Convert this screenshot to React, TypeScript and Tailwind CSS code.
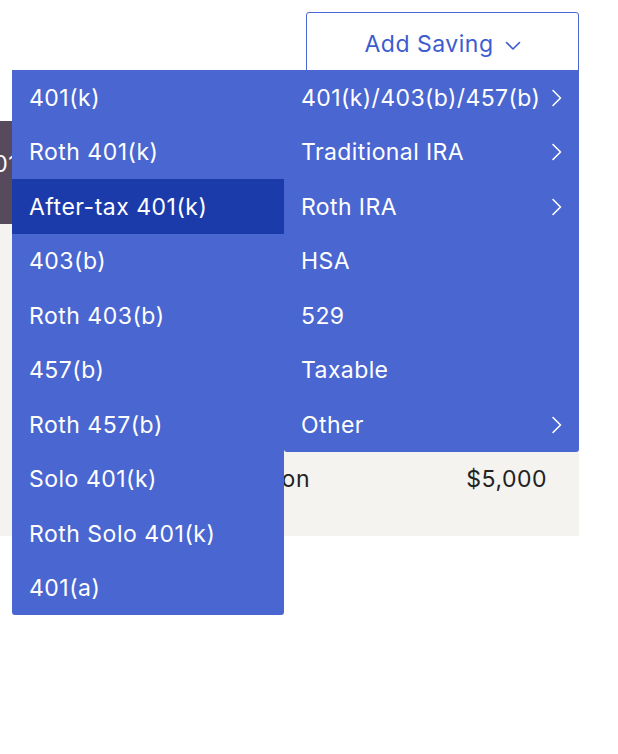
import React from "react";

const sub = [
  "401(k)",
  "Roth 401(k)",
  "After-tax 401(k)",
  "403(b)",
  "Roth 403(b)",
  "457(b)",
  "Roth 457(b)",
  "Solo 401(k)",
  "Roth Solo 401(k)",
  "401(a)",
];

const main: { label: string; arrow: boolean }[] = [
  { label: "401(k)/403(b)/457(b)", arrow: true },
  { label: "Traditional IRA", arrow: true },
  { label: "Roth IRA", arrow: true },
  { label: "HSA", arrow: false },
  { label: "529", arrow: false },
  { label: "Taxable", arrow: false },
  { label: "Other", arrow: true },
];

function Chevron() {
  return (
    <svg width="12" height="18" viewBox="0 0 12 18" fill="none" className="shrink-0">
      <path d="M2 1.5 L9.5 9 L2 16.5" stroke="white" strokeWidth="1.6" strokeLinecap="round" strokeLinejoin="round" />
    </svg>
  );
}

export default function App() {
  return (
    <div className="relative w-[618px] h-[754px] bg-white overflow-hidden" style={{ fontFamily: "Inter, 'Noto Sans', sans-serif" }}>
      {/* Button */}
      <div className="pt-[12px] pl-[306px]">
        <button className="w-[273px] h-[62px] border border-[#4a66d1] rounded-t-[3px] bg-white flex items-start justify-center pt-[14px] gap-[11px] text-[#3d5ccf] text-[23px] tracking-[0.5px]">
          <span>Add Saving</span>
          <svg width="16" height="10" viewBox="0 0 16 10" fill="none" className="mt-[14px]">
            <path d="M1.5 1.5 L8 8 L14.5 1.5" stroke="#3d5ccf" strokeWidth="1.6" strokeLinecap="round" strokeLinejoin="round" />
          </svg>
        </button>
      </div>

      {/* Card under menu */}
      <div className="absolute left-0 top-[121px] w-[579px]">
        <div className="h-[103px] bg-[#584a5d] pt-[26px]">
          <span className="block -ml-[22px] text-white text-[23px] tracking-[0.5px]">401(k)</span>
        </div>
        <div className="h-[312px] bg-[#f4f3f0] grid grid-cols-[310px_1fr] pt-[238px] text-[#222] text-[23px] tracking-[0.5px]">
          <div className="flex justify-end"><span>Contribution</span></div>
          <div className="flex justify-end pr-[32px]"><span>$5,000</span></div>
        </div>
      </div>

      {/* Main menu */}
      <div className="absolute left-[284px] top-[70px] w-[295px] bg-[#4a66d1] rounded-b-[3px] text-white text-[23px] tracking-[0.4px]">
        {main.map((m) => (
          <div key={m.label} className="h-[54.5px] flex items-center justify-between pl-[17px] pr-[16px] pt-[1px]">
            <span>{m.label}</span>
            {m.arrow && <Chevron />}
          </div>
        ))}
      </div>

      {/* Submenu */}
      <div className="absolute left-[12px] top-[70px] w-[272px] bg-[#4a66d1] rounded-b-[3px] text-white text-[23px] tracking-[0.5px]">
        {sub.map((s) => (
          <div
            key={s}
            className={
              s === "After-tax 401(k)"
                ? "h-[54.5px] flex items-center pl-[17px] pt-[1px] bg-[#1c3bab]"
                : "h-[54.5px] flex items-center pl-[17px] pt-[1px]"
            }
          >
            <span>{s}</span>
          </div>
        ))}
      </div>
    </div>
  );
}
